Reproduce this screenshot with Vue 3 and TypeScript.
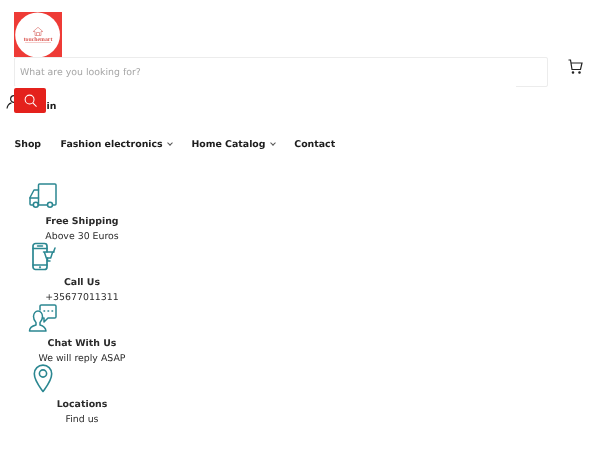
<script setup lang="ts">
interface Feature { title: string; text: string; icon: string }
const features: Feature[] = [
  { title: 'Free Shipping', text: 'Above 30 Euros', icon: 'truck' },
  { title: 'Call Us', text: '+35677011311', icon: 'phone' },
  { title: 'Chat With Us', text: 'We will reply ASAP', icon: 'chat' },
  { title: 'Locations', text: 'Find us', icon: 'pin' },
]
</script>

<template>
  <div class="page">
    <header class="header">
      <a class="logo">
        <svg width="48" height="46" viewBox="0 0 48 46">
          <rect width="48" height="46" fill="#ee3b36" />
          <circle cx="23.600" cy="23" r="22.400" fill="#fff" />
          <path d="M21 23.500v-4h-1.800l4.800-4.200 4.800 4.200H27v4zM22.500 23.500v-3h3v3" fill="none" stroke="#dd7a76" stroke-width=".7" />
          <text x="24" y="28.500" text-anchor="middle" class="logo-text">touchemart</text>
          <rect x="11" y="30" width="26" height=".8" fill="#f3c0bd" />
        </svg>
      </a>
      <div class="search-row">
        <div class="search">
          <span class="placeholder">What are you looking for?</span>
          <span class="border-gap"></span>
        </div>
        <svg class="cart" width="15" height="15" viewBox="0 0 15 15" fill="none" stroke="#222" stroke-width="1.200">
          <path d="M.5 1h2l1.500 9.500h8.500L14 4H3" />
          <circle cx="5" cy="13.500" r=".7" fill="#222" />
          <circle cx="11.500" cy="13.500" r=".7" fill="#222" />
        </svg>
      </div>
      <div class="account">
        <svg width="15" height="14" viewBox="0 0 15 14" fill="none" stroke="#222" stroke-width="1.200">
          <circle cx="8" cy="4" r="3.400" />
          <path d="M1 13.500c.4-3 2.500-5 4.500-5.600M10.500 7.900c2 .6 3.600 2.600 4 5.600" />
        </svg>
        <span class="sign">Sign in</span>
        <button class="go" aria-label="Search">
          <svg width="13" height="13" viewBox="0 0 14 14" fill="none" stroke="#fff" stroke-width="1.100">
            <circle cx="6" cy="6" r="4.800" />
            <path d="M9.500 9.500 13.500 13.500" />
          </svg>
        </button>
      </div>
    </header>

    <nav class="nav">
      <a>Shop</a>
      <a>Fashion electronics <span class="chev"></span></a>
      <a>Home Catalog <span class="chev"></span></a>
      <a>Contact</a>
    </nav>

    <section class="features">
      <div v-for="f in features" :key="f.title" class="feature">
        <svg class="ficon" width="28" height="28" viewBox="0 0 28 28" fill="none" stroke="#2b8791" stroke-width="1.500" stroke-linejoin="round" stroke-linecap="round">
          <g v-if="f.icon === 'truck'">
            <path d="M9.500 7V2c0-.6.500-1 1-1h15.500c.6 0 1 .4 1 1v19c0 .6-.4 1-1 1h-2.500" />
            <path d="M18.500 22H9M4.500 22H2a1 1 0 0 1-1-1v-6.500L5 7h4.500v15" />
            <path d="M1 15h8.500" />
            <circle cx="6.800" cy="21.800" r="2.500" />
            <circle cx="21" cy="21.800" r="2.500" />
          </g>
          <g v-else-if="f.icon === 'phone'" transform="translate(0.500,-1)">
            <rect x="3.500" y="0.500" width="14" height="26" rx="2.500" stroke-width="1.700" />
            <path d="M3.500 5.500h14M3.500 22h14M8 3h5" />
            <circle cx="10.500" cy="24.300" r=".4" />
            <path d="M14 9h10.500M15 9.500l1.800 5.500h4.400L23 9.500" fill="#fff" />
            <path d="M18 15v3h2.500M25.500 5l-1.500 4" />
          </g>
          <g v-else-if="f.icon === 'chat'" transform="translate(0,-1)">
            <path d="M11 6V2.300C11 1.600 11.600 1 12.300 1h13.400c.7 0 1.300.6 1.300 1.300v10.400c0 .7-.6 1.300-1.300 1.300H19l-4 4v-4h-1.500" />
            <path d="M15 7h.6M19 7h.6M23 7h.6" stroke-width="1.500" />
            <path d="M.5 27c0-3.500 2.500-5 6.500-6v-2.500c-2-2-2.500-3.500-2.500-6 0-3 2-5.500 4.500-5.500s4.500 2.500 4.500 5.500c0 2.500-.5 4-2.500 6V21c3.500 1 5.500 2.500 6 6z" />
          </g>
          <g v-else transform="translate(0,-2)">
            <path d="M14 27.500C10 22 5.300 16.500 5.300 9.800a8.700 8.700 0 0 1 17.400 0c0 6.700-4.700 12.200-8.700 17.700z" stroke-width="1.600" />
            <circle cx="14" cy="9.500" r="3.600" stroke-width="1.600" />
          </g>
        </svg>
        <h3 class="ftitle">{{ f.title }}</h3>
        <p class="ftext">{{ f.text }}</p>
      </div>
    </section>
  </div>
</template>

<style>
html, body { margin: 0; background: #fff; }
</style>

<style scoped>
.page {
  width: 600px;
  height: 450px;
  overflow: hidden;
  font-family: "DejaVu Sans", sans-serif;
  font-size: 9.400px;
  text-rendering: geometricPrecision;
  color: #2b2b2b;
  background: #fff;
  filter: blur(.3px);
}
.header { padding: 12px 0 0 14px; }
.logo { display: block; width: 48px; height: 45px; overflow: hidden; }
.logo svg { display: block; }
.logo-text {
  font-family: "Liberation Serif", serif;
  font-size: 5.800px;
  font-weight: 700;
  fill: #dc5c57;
}
.search-row { display: flex; align-items: center; }
.search {
  position: relative;
  box-sizing: border-box;
  width: 534px;
  height: 30px;
  border: 1px solid #ececec;
  border-radius: 2px;
  padding: 1px 5px 0;
  line-height: 28px;
}
.placeholder { color: #a6a6a6; }
.border-gap {
  position: absolute;
  left: 0;
  bottom: -1px;
  width: 501px;
  height: 1px;
  background: #fff;
}
.cart { margin: -11px 0 0 19.500px; }
.account {
  position: relative;
  display: flex;
  align-items: center;
  height: 25px;
  margin: 1px 0 0 -8px;
}
.sign { font-weight: 700; margin: 11px 0 0 -1px; color: #1d1d1d; }
.account > svg { margin-top: 3px; }
.go {
  position: absolute;
  left: 8px;
  top: 0;
  width: 32px;
  height: 25px;
  padding: 0;
  border: 0;
  border-radius: 2px;
  background: #e4211c;
  display: flex;
  align-items: center;
  justify-content: center;
}
.nav {
  display: flex;
  gap: 19.500px;
  margin: 24px 0 0 14.500px;
  font-weight: 700;
  line-height: 16px;
  color: #1d1d1d;
}
.chev {
  display: inline-block;
  width: 3px;
  height: 3px;
  margin: 0 0 2px 2px;
  border-right: 1px solid #555;
  border-bottom: 1px solid #555;
  transform: rotate(45deg);
}
.features { margin: 30px 0 0 14px; width: 136px; }
.feature { height: 61px; text-align: center; }
.ficon { display: block; margin-left: 15px; overflow: visible; }
.ftitle { margin: 3px 0 0; font-size: 9.400px; font-weight: 700; line-height: 15px; }
.ftext { margin: 0; line-height: 15px; }
</style>
